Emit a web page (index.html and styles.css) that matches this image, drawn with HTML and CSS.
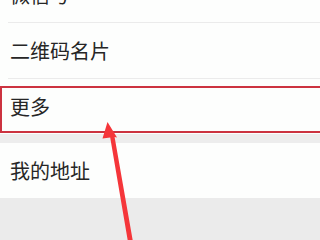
FILE: index.html
```html
<!DOCTYPE html>
<html lang="zh-CN">
<head>
<meta charset="utf-8">
<title>设置</title>
<link rel="stylesheet" href="styles.css">
</head>
<body>
<div class="page">
  <div class="list">
    <div class="section">
      <div class="row">微信号</div>
      <div class="divider"></div>
      <div class="row">二维码名片</div>
      <div class="divider"></div>
      <div class="row">更多</div>
    </div>
    <div class="gap"></div>
    <div class="section">
      <div class="row">我的地址</div>
    </div>
  </div>
  <div class="highlight"></div>
  <svg class="arrow" width="320" height="240" viewBox="0 0 320 240">
    <polygon points="107.5,122 117,137.5 114.6,137 133,242 128,242 110.2,137.5 102.5,138.5" fill="#f5363a"/>
  </svg>
</div>
</body>
</html>
```
FILE: styles.css
```css
html, body {
  margin: 0;
  padding: 0;
}
body {
  background: #ebebeb;
  font-family: "Noto Sans CJK SC", "Noto Sans", sans-serif;
  color: #262626;
}
.page {
  position: relative;
  width: 320px;
  height: 240px;
  overflow: hidden;
}
.list {
  margin-top: -33px;
}
.section {
  background: #fdfefd;
}
.row {
  height: 55px;
  display: flex;
  align-items: center;
  padding-left: 10px;
  font-size: 20px;
  line-height: 1;
}
.divider {
  height: 1px;
  margin-left: 8px;
  background: #ebebeb;
}
.gap {
  height: 9px;
  background: #ededed;
}
.highlight {
  position: absolute;
  left: 0;
  top: 86px;
  width: 340px;
  height: 43px;
  border: 2px solid #cc3340;
}
.arrow {
  position: absolute;
  left: 0;
  top: 0;
}
```
